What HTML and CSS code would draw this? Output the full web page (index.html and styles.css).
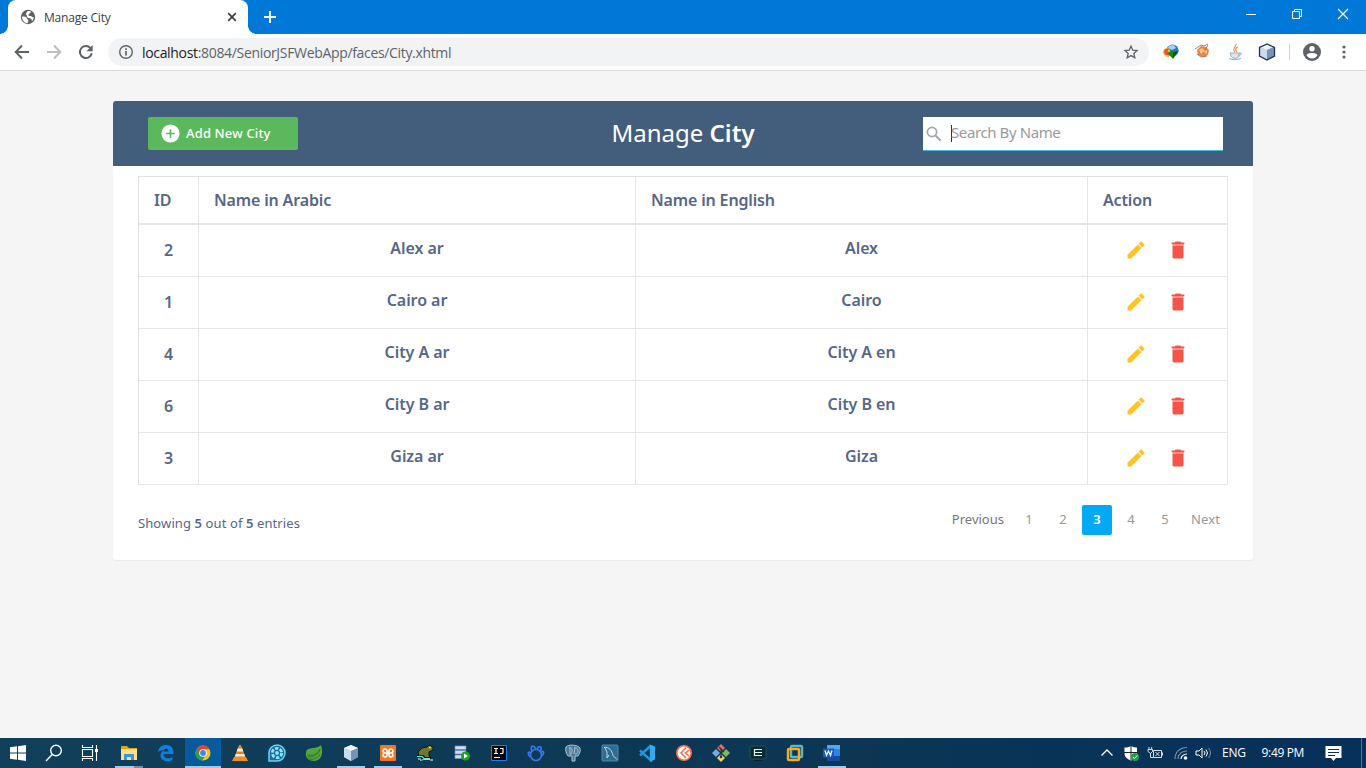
FILE: index.html
```html
<!DOCTYPE html>
<html lang="en">
<head>
<meta charset="utf-8">
<title>Manage City</title>
<link rel="stylesheet" href="styles.css">
</head>
<body>
<svg class="defs" aria-hidden="true">
  <symbol id="pen" viewBox="0 0 24 24"><path d="M3 17.250V21h3.750L17.810 9.940l-3.750-3.750L3 17.250zM20.710 7.040a1 1 0 0 0 0-1.410l-2.340-2.340a1 1 0 0 0-1.410 0l-1.830 1.830 3.750 3.750 1.830-1.830z" fill="#ffc324" stroke="#ffc324" stroke-width=".5"/></symbol>
  <symbol id="bin" viewBox="0 0 24 24"><path d="M6 7v12.500c0 1 .9 1.700 2 1.700h8c1.100 0 2-.7 2-1.700V7z" fill="#f55549"/><path d="M6 5.500h12v2H6z" fill="#f99d96"/><path d="M19 3.700h-3.500l-1-1h-5l-1 1H5v2h14z" fill="#f55549"/></symbol>
  <symbol id="cube" viewBox="0 0 18 18"><path d="M9 1l7 3v9l-7 4-7-4V4z" fill="#a6bfd8"/><path d="M2 4l7-3 7 3-7 3z" fill="#eef5fb"/><path d="M9 7l7-3v9l-7 4z" fill="#7794b6"/><path d="M2 4l7 3v10l-7-4z" fill="#c9dcec"/></symbol>
</svg>
<header class="tabs">
  <div class="tab">
    <svg width="16" height="16" viewBox="0 0 16 16"><circle cx="8" cy="8" r="7.200" fill="#5f6368"/><path d="M2 7.500c2 .2 4.500 0 5 1.800.2 1.500 1.500 1.200 1.300 2.700l-.8 2.300C4 14 1.800 11 2 7.500zM7.500 2.200c1.200-.6 3 0 3.500.6-.2 1.200-1.500 1.400-2.200 2.400-1 1.200.2 1.900 1.600 1.700 1.600-.1 2 1.800 3.400 1.300-.2 1.800-.9 3-1.800 3.900-.6-1.300-.2-2.500-1.900-2.800-1.800-.2-3.100-.7-3.200-2.300 0-1.300-.8-1-1-2 .2-1 .8-1.700 1.600-2.800z" fill="#fff"/></svg>
    <span class="tab-title">Manage City</span>
    <svg class="tab-close" width="10" height="10" viewBox="0 0 10 10"><path d="M1.200 1.200l7.600 7.600M8.800 1.200L1.200 8.800" stroke="#3c4043" stroke-width="1.700"/></svg>
  </div>
  <svg class="new-tab" width="14" height="14" viewBox="0 0 14 14"><path d="M7 1v12M1 7h12" stroke="#fff" stroke-width="2"/></svg>
  <div class="win-buttons">
    <svg width="12" height="12" viewBox="0 0 12 12"><path d="M1 6.500h10" stroke="#fff"/></svg>
    <svg width="12" height="12" viewBox="0 0 12 12"><path d="M1.500 3.500h7v7h-7zM3.500 3.500v-2h7v7h-2" fill="none" stroke="#fff"/></svg>
    <svg width="12" height="12" viewBox="0 0 12 12"><path d="M1 1l10 10M11 1L1 11" stroke="#fff" stroke-width="1.200"/></svg>
  </div>
</header>
<nav class="toolbar">
  <svg width="16" height="16" viewBox="0 0 16 16"><path d="M15 8H2M8 1.500L1.700 8 8 14.500" fill="none" stroke="#5f6368" stroke-width="2"/></svg>
  <svg width="16" height="16" viewBox="0 0 16 16"><path d="M1 8h13M8 1.500L14.300 8 8 14.500" fill="none" stroke="#bcbec1" stroke-width="2"/></svg>
  <svg width="16" height="16" viewBox="0 0 16 16"><path d="M13.800 9.200A6 6 0 1 1 12.400 4" fill="none" stroke="#5f6368" stroke-width="2"/><path d="M14.700 1v6.300H8.500z" fill="#5f6368"/></svg>
  <div class="omnibox">
    <svg width="16" height="16" viewBox="0 0 16 16"><circle cx="8" cy="8" r="6.300" fill="none" stroke="#5f6368" stroke-width="1.400"/><path d="M8 7v4.500M8 4.200v1.700" stroke="#5f6368" stroke-width="1.700"/></svg>
    <span class="url"><b>localhost</b>:8084/SeniorJSFWebApp/faces/City.xhtml</span>
    <svg class="star" width="16" height="16" viewBox="0 0 16 16"><path d="M8 2.200l1.800 4 4.300.4-3.300 2.900 1 4.300L8 11.600l-3.800 2.200 1-4.300-3.300-2.900 4.300-.4z" fill="none" stroke="#5f6368" stroke-width="1.300"/></svg>
  </div>
  <div class="extensions">
    <svg width="18" height="18" viewBox="0 0 18 18"><circle cx="10.500" cy="7.500" r="6" fill="#2e77b8"/><path d="M7 2.500l5-.5 2 3-4 2-4-2z" fill="#9cd4ef"/><path d="M2 6c3-2 5-1 6 1l-1 7c-3 0-6-2-6-5z" fill="#f0c51d"/><path d="M2 8c1-2 3-3 5-2-2 2-2 4 1 6-4 1-6-1-6-4z" fill="#e85135"/><path d="M5 9.500l12-2-6 8.500z" fill="#16851d"/><path d="M11 10l5-2-5 7z" fill="#064c15"/></svg>
    <svg width="18" height="18" viewBox="0 0 18 18"><g transform="translate(0 -1)"><path d="M3 8l4-4 5 1 3 3-1 5-5 2-5-2z" fill="#e9873d"/><path d="M5 8l3-2 3 3-4 3zM10 10l3-2v4z" fill="#f9c090"/><path d="M1 7l6-4 3 1 4-2M14 3l-3 5M3 12l4 3 6-1" fill="none" stroke="#8c6652" stroke-width=".8"/></g></svg>
    <svg width="18" height="18" viewBox="0 0 18 18"><path d="M10 1c1 3-5 4-1 8M12 4c-3 1-3 3-1 5" fill="none" stroke="#ef8a3c" stroke-width="1.100"/><path d="M4 10h9v3c-1 3-7 3-8 0zM13 10c4-1 2 3-1 3M3 15.500c3 1.500 8 1.500 12 0" fill="#dce6ed" stroke="#98b0c1"/></svg>
    <svg width="18" height="18" viewBox="0 0 18 18"><use href="#cube"/><path d="M9 1l7.500 3.500v8.500L9 17l-7.500-4V4.500z" fill="none" stroke="#1f2f5e" stroke-width="1.300"/></svg>
    <i class="divider"></i>
    <svg width="18" height="18" viewBox="0 0 18 18"><circle cx="9" cy="9" r="9" fill="#5f6368"/><circle cx="9" cy="5.700" r="2.700" fill="#fff"/><path d="M3.600 12.500c0-3.500 10.800-3.500 10.800 0C13 14.400 11.200 15.400 9 15.400s-4-1-5.400-2.900z" fill="#fff"/></svg>
    <svg class="more" width="4" height="14" viewBox="0 0 4 14"><g fill="#5f6368"><circle cx="2" cy="2" r="1.600"/><circle cx="2" cy="7" r="1.600"/><circle cx="2" cy="12" r="1.600"/></g></svg>
  </div>
</nav>

<main class="page">
  <section class="card">
    <div class="card-head">
      <button class="add"><svg width="19" height="19" viewBox="0 0 20 20"><circle cx="10" cy="10" r="9.500" fill="#fff"/><path d="M10 5.500v9M5.500 10h9" stroke="#5cb85c" stroke-width="1.700"/></svg><span>Add New City</span></button>
      <h2 class="title">Manage <b>City</b></h2>
      <div class="search"><svg width="16" height="16" viewBox="0 0 16 16"><circle cx="6" cy="6" r="4.600" fill="none" stroke="#a0a5b1" stroke-width="1.700"/><path d="M9.500 9.500l5 5" stroke="#a0a5b1" stroke-width="2"/></svg><i class="caret"></i><span>Search By Name</span></div>
    </div>
    <div class="card-body">
      <table class="cities">
        <colgroup><col class="c-id"><col class="c-ar"><col class="c-en"><col class="c-act"></colgroup>
        <thead><tr><th>ID</th><th>Name in Arabic</th><th>Name in English</th><th>Action</th></tr></thead>
        <tbody>
          <tr><td class="id">2</td><td>Alex ar</td><td>Alex</td><td class="act"><div><svg><use href="#pen"/></svg><svg><use href="#bin"/></svg></div></td></tr>
          <tr><td class="id">1</td><td>Cairo ar</td><td>Cairo</td><td class="act"><div><svg><use href="#pen"/></svg><svg><use href="#bin"/></svg></div></td></tr>
          <tr><td class="id">4</td><td>City A ar</td><td>City A en</td><td class="act"><div><svg><use href="#pen"/></svg><svg><use href="#bin"/></svg></div></td></tr>
          <tr><td class="id">6</td><td>City B ar</td><td>City B en</td><td class="act"><div><svg><use href="#pen"/></svg><svg><use href="#bin"/></svg></div></td></tr>
          <tr><td class="id">3</td><td>Giza ar</td><td>Giza</td><td class="act"><div><svg><use href="#pen"/></svg><svg><use href="#bin"/></svg></div></td></tr>
        </tbody>
      </table>
      <div class="foot">
        <div class="hint">Showing <b>5</b> out of <b>5</b> entries</div>
        <div class="pager"><span class="word prev">Previous</span><span>1</span><span>2</span><span class="on">3</span><span>4</span><span>5</span><span class="word next">Next</span></div>
      </div>
    </div>
  </section>
</main>

<footer class="taskbar">
  <div class="system">
    <div class="slot"><svg viewBox="0 0 18 18"><path d="M1 3.300l7-1v6.200H1zM9 2.200L17 1v7.500H9zM1 9.500h7v6.300l-7-1zM9 9.500h8V17l-8-1.200z" fill="#fff"/></svg></div>
    <div class="slot"><svg viewBox="0 0 18 18"><circle cx="11" cy="6.500" r="5.300" fill="none" stroke="#fff" stroke-width="1.400"/><path d="M7.200 10.500L1 17" stroke="#fff" stroke-width="1.400"/></svg></div>
    <div class="slot"><svg viewBox="0 0 18 18"><path d="M1.500 1v2.500h10V1M1.500 17v-2.500h10V17M1.500 5.500h10v7h-10zM15.500 1v16" fill="none" stroke="#fff" stroke-width="1.100"/><path d="M14 5h3v3h-3z" fill="#fff"/></svg></div>
  </div>
  <div class="apps">
    <div class="slot run split"><svg viewBox="0 0 18 18"><path d="M1 2h6l2 2h8v12H1z" fill="#dca31b"/><path d="M1 5h16v11H1z" fill="#ffe08a"/><path d="M4 16v-6h10v6h-3v-3H7v3z" fill="#3c94dc"/></svg></div>
    <div class="slot"><svg viewBox="0 0 18 18"><path d="M1 8C2 2.500 5.500 1 9 1c5 0 7.500 3.500 7.500 7.500V10H6.500c0 5 6 5 9 3v3c-3 1.800-7 1.500-9.500 0C2 13.500 3 8 7 6c-3 .2-5 1-6 2zm5.500-.5h5C11.500 3.500 7 3.500 6.500 7.500z" fill="#0e7fe0"/></svg></div>
    <div class="slot active"><svg viewBox="0 0 18 18"><circle cx="9" cy="9" r="7.500" fill="#f2c51d"/><path d="M2.500 5.200A7.500 7.500 0 0 0 8 16.400l4-5.400-3-2z" fill="#27a056"/><path d="M9 5.200h6.500a7.500 7.500 0 0 0-13 0L6 11z" fill="#e14335"/><circle cx="9" cy="9" r="3.800" fill="#fff"/><circle cx="9" cy="9" r="2.900" fill="#4285f4"/></svg></div>
    <div class="slot"><svg viewBox="0 0 18 18"><path d="M8 1h2l4.500 12h-11z" fill="#ef7e17"/><path d="M6.700 4.500h4.600l1 3H5.700zM4.800 10h8.400l.8 2.500H4z" fill="#eee"/><path d="M3 13h12l2 4H1z" fill="#f28c1f"/></svg></div>
    <div class="slot"><svg viewBox="0 0 18 18"><path d="M1 17V9a8 8 0 1 1 8 8z" fill="#1e6d91" stroke="#62d5ff" stroke-width="1.500"/><circle cx="9" cy="9" r="4.700" fill="none" stroke="#8fe4ff" stroke-width="2.800" stroke-dasharray="3.400 1.500"/><circle cx="9" cy="9" r="1.900" fill="#8fe4ff"/></svg></div>
    <div class="slot"><svg viewBox="0 0 18 18"><path d="M16 1c3 9 0 16-7 16C3 17 0 13 1 9c0-7 10-3 15-8z" fill="#55a53d"/><path d="M2 11c4 1 10 0 13-6-2 7-7 8-12 8M4 15c5 1 9-1 11-5" fill="none" stroke="#2f7a33" stroke-width="1"/></svg></div>
    <div class="slot run"><svg viewBox="0 0 18 18"><use href="#cube"/></svg></div>
    <div class="slot run"><svg viewBox="0 0 18 18"><rect x="1" y="1" width="16" height="16" rx="1" fill="#f37623"/><path d="M7.500 9H6a2 2 0 1 1 2-2.500v5A2 2 0 1 1 6 9h6a2 2 0 1 0-2-2.500v5A2 2 0 1 0 12 9" fill="none" stroke="#fff" stroke-width="1.600"/></svg></div>
    <div class="slot"><svg viewBox="0 0 18 18"><path d="M2 8l4-4 5-1 2-2 2 1 2 1v3l-4 2v4l2 1-3 1-9-1z" fill="#75752e" stroke="#101608"/><path d="M1 12.500h6l2 2h6M3 17l4-2h7" fill="none" stroke="#101608" stroke-width="2.600"/><path d="M1 12.500h5l2 2h6M4 16.500l4-1h6" fill="none" stroke="#5eeeff" stroke-width="1.200"/><circle cx="14" cy="3.500" r="1" fill="#e7dc8b"/><path d="M2 15h3M14 16h3" stroke="#fff"/></svg></div>
    <div class="slot"><svg viewBox="0 0 18 18"><path d="M2 2h11v3.500H2zM2 6.500h11V10H2zM2 11h11v3.500H2z" fill="#cfddf5" stroke="#728fbe" stroke-width=".7"/><circle cx="12.500" cy="12" r="4.500" fill="#1ba51d"/><path d="M11 9.500l4 2.500-4 2.500z" fill="#fff"/></svg></div>
    <div class="slot"><svg viewBox="0 0 18 18"><path d="M1.500 1.500h15v15h-15z" fill="#080808" stroke="#227aed"/><path d="M4 4.500h4M6 4.500v5M4 9.500h4M10 4.500h3v4q0 1-1 1h-2M4 13.500h6" stroke="#fff" stroke-width="1.200" fill="none"/></svg></div>
    <div class="slot"><svg viewBox="0 0 18 18"><g fill="none" stroke="#3875ee" stroke-width="1.700"><circle cx="9" cy="11" r="5.500"/><path d="M5 7.500C2 1 8 .5 8.700 5.500M10 5.500c1-5 6.500-3 3.200 1.500M3.800 9C0 6 1 12 3.500 13M14 8c4-2 3 2 .5 4"/></g></svg></div>
    <div class="slot"><svg viewBox="0 0 18 18"><path d="M2 3c3-3 10-2 13 0 3 3 0 7-1 9h-3v5H8v-5H4C2 9 1 6 2 3z" fill="#4d7898" stroke="#b2c5d3"/><path d="M6 3v8M11 3l-1 7M5 4c4-2 4 7 1 6M11 4c4-1 4 7 0 6" fill="none" stroke="#b2c5d3" stroke-width=".9"/></svg></div>
    <div class="slot"><svg viewBox="0 0 18 18"><rect x="1" y="1" width="16" height="16" rx="1" fill="#2f6d90" stroke="#5089a8"/><path d="M3 3.500c5-1 8 3 9 8l4 4M4 4l2 4v6l2-3" fill="none" stroke="#c4d9e4"/></svg></div>
    <div class="slot"><svg viewBox="0 0 18 18"><path d="M13 1.500v15L2 6.500M13 1.500L2 11.500" fill="none" stroke="#2196df" stroke-width="2.400"/><path d="M12 .5l5 2v13l-5 2z" fill="#35a9ee"/></svg></div>
    <div class="slot"><svg viewBox="0 0 18 18"><circle cx="9" cy="9" r="7.200" fill="#fff" stroke="#ff6c45" stroke-width="1.600"/><path d="M11 3.500L6 9l5 5M14 6l-3.500 3 3.500 3" stroke="#ff6c45" stroke-width="1.600" fill="none"/></svg></div>
    <div class="slot"><svg viewBox="0 0 18 18"><path d="M9 0l4 4-4 4-4-4z" fill="#e56e65"/><path d="M4 5l4 4-4 4-4-4z" fill="#79a8ea"/><path d="M14 5l4 4-4 4-4-4z" fill="#79bf59"/><path d="M9 10l4 4-4 4-4-4z" fill="#f2d269"/><path d="M7 3l5 5M9 4v9" stroke="#30303a" stroke-width="1.300"/><circle cx="9" cy="13" r="1.300" fill="#30303a"/></svg></div>
    <div class="slot"><svg viewBox="0 0 18 18"><rect x="1" y="2" width="16" height="13" rx="1" fill="#0d2b32" stroke="#244f55"/><path d="M13 5.500H5.500v6H13M6 8.500h7" fill="none" stroke="#e5f5ef" stroke-width="1.200"/><path d="M5 16.500h8" stroke="#0a1e29"/></svg></div>
    <div class="slot"><svg viewBox="0 0 18 18"><rect x="5" y="2" width="11" height="11" rx="1" fill="none" stroke="#5bb6c4" stroke-width="2.500"/><rect x="2" y="5" width="11" height="11" rx="1" fill="none" stroke="#f7a91f" stroke-width="2.500"/></svg></div>
    <div class="slot run"><svg viewBox="0 0 18 18"><path d="M4 1h13v16H4z" fill="#2e85dd"/><path d="M4 1h13v4H4z" fill="#50a9ee"/><path d="M4 12h13v5H4z" fill="#154aa0"/><path d="M0 4.500h11v9H0z" fill="#1859bd"/><path d="M2 6.500l1.500 5L5.500 7l2 4.500L9 6.500" stroke="#fff" fill="none" stroke-width="1.300"/></svg></div>
  </div>
  <div class="tray">
    <svg width="14" height="14" viewBox="0 0 14 14"><path d="M1.500 9.500L7 4l5.500 5.500" stroke="#fff" fill="none" stroke-width="1.300"/></svg>
    <svg class="shield" width="17" height="17" viewBox="0 0 17 17"><path d="M8 1c2 1 4 1.500 6 1.500V8c0 4-3 6-6 7.500C4 14 1.500 12 1.500 8V2.500C4 2.500 6 2 8 1z" fill="#fff"/><path d="M8 1v14M1 7.500h13" stroke="#222"/><circle cx="12" cy="12" r="4" fill="#18a150"/><path d="M9.800 12l1.500 1.500 3-3" stroke="#fff" fill="none"/></svg>
    <svg class="power" width="17" height="14" viewBox="0 0 17 14"><path d="M1 3.500h4.500v2L3.500 7.500 1 5.500zM2 1v2M4.700 1v2M3.500 7.500v4H6M6.500 4.500h8v7h-8zM15.500 6.500v3M8.500 6l4 4M12.500 6l-4 4" fill="none" stroke="#eef3f7" stroke-width=".9"/></svg>
    <svg class="wifi" width="14" height="14" viewBox="0 0 14 14"><g fill="none" stroke="#7890a5" stroke-width="1.200"><path d="M1 13C1 6 6 1.500 13 1.500M4 13c0-5 4-8 9-8"/><path d="M7 13c0-3 3-5 6-5" stroke="#fff"/></g><circle cx="11.500" cy="12" r="1.800" fill="#fff"/></svg>
    <svg class="sound" width="17" height="14" viewBox="0 0 17 14"><path d="M1 5h3l3-3v10L4 9H1z" fill="none" stroke="#fff"/><path d="M9 5q2 2 0 4M11 3.500q3 3.500 0 7" fill="none" stroke="#fff"/><path d="M13.500 2q4 5 0 10" fill="none" stroke="#7890a5"/></svg>
    <span class="lang">ENG</span>
    <span class="clock">9:49 PM</span>
    <svg class="note" width="17" height="17" viewBox="0 0 17 17"><path d="M.5 1h16v12H11l-2.500 3L6 13H.500z" fill="#fff"/><path d="M3 4.500h11M3 7.500h11M3 10.500h7" stroke="#0b3155"/></svg>
    <i class="edge"></i>
  </div>
</footer>
</body>
</html>
```
FILE: styles.css
```css
* { box-sizing: border-box; }
body { margin: 0; width: 1366px; height: 768px; overflow: hidden; display: flex; flex-direction: column; background: #f5f5f5; font-family: "Noto Sans", "Open Sans", sans-serif; color: #566787; }
svg { display: block; flex: none; }
.defs { display: none; }

.tabs { height: 34px; flex: none; background: #0078d7; display: flex; padding-left: 8px; }
.tab { width: 240px; height: 34px; background: #fff; border-radius: 8px 8px 0 0; display: flex; align-items: center; padding: 0 12px; position: relative; }
.tab::before, .tab::after { content: ""; position: absolute; bottom: 0; width: 8px; height: 8px; }
.tab::before { left: -8px; background: radial-gradient(circle at 0 0, #0078d7 7.5px, #fff 8px); }
.tab::after { right: -8px; background: radial-gradient(circle at 100% 0, #0078d7 7.5px, #fff 8px); }
.tab-title { margin-left: 8px; font: 12px "Open Sans", sans-serif; color: #3c4043; letter-spacing: -.2px; }
.tab-close { margin-left: auto; margin-right: -1px; }
.new-tab { margin: 10px 0 0 15px; }
.win-buttons { margin: 8px 17px 0 auto; display: flex; gap: 34px; }

.toolbar { height: 37px; flex: none; background: #fff; border-bottom: 1px solid #dcdcdc; display: flex; align-items: center; padding-left: 14px; gap: 16px; }
.omnibox { width: 1041px; height: 28px; border-radius: 14px; background: #f1f3f4; display: flex; align-items: center; padding: 0 10px; margin-left: -2px; }
.url { margin-left: 8px; font: 14px "Open Sans", sans-serif; letter-spacing: -.33px; color: #5f6368; }
.url b { font-weight: 400; color: #202124; }
.star { margin-left: auto; }
.extensions { display: flex; align-items: center; gap: 14px; margin-left: -3px; }
.divider { width: 1px; height: 16px; background: #cfd1d4; margin-left: -1px; margin-right: -1px; }
.more { margin-left: 7px; }

.page { flex: 1; padding: 30px 113px 0; }
.card { height: 459px; background: #fff; border-radius: 3px; box-shadow: 0 1px 1px rgba(0,0,0,.05); }
.card-head { height: 65px; background: #435d7d; border-radius: 3px 3px 0 0; padding: 16px 30px 0 35px; display: grid; grid-template-columns: 295px 1fr 300px; align-items: start; }
.add { width: 150px; height: 33px; border: 0; border-radius: 2px; background: #5cb85c; color: #fff; display: flex; align-items: center; padding: 0 13px; gap: 6px; font: 500 13px "Noto Sans", sans-serif; letter-spacing: .15px; }
.add span { padding-bottom: 1px; }
.title { margin: 0; text-align: center; font-size: 24px; font-weight: 400; line-height: 32px; color: #fff; }
.title b { font-weight: 600; }
.search { height: 34px; background: #fff; border-bottom: 1px solid #3fbae4; display: flex; align-items: center; padding-left: 3px; font-size: 15px; letter-spacing: -.4px; color: #9a9a9a; }
.search span { padding-bottom: 3px; }
.caret { width: 1px; height: 17px; margin-left: 9px; margin-right: -1px; background: #333; }

.card-body { padding: 10px 25px 0; }
.cities { width: 1090px; table-layout: fixed; border-collapse: separate; border-spacing: 0; border: solid #e0e0e0; border-width: 1px 0 0 1px; font-size: 16px; }
.c-id { width: 60px; } .c-ar { width: 437px; } .c-en { width: 452px; } .c-act { width: 140px; }
th, td { border: solid #e6e6e6; border-width: 0 1px 1px 0; font-weight: 600; line-height: 22px; }
th { height: 48px; border-bottom-width: 2px; padding: 0 15px 1px; text-align: left; letter-spacing: -.15px; }
td { height: 52px; padding: 12px 0 0; vertical-align: top; text-align: center; letter-spacing: -.05px; }
td.id { padding-top: 14px; }
td.act { padding-top: 14px; }
.act div { display: flex; gap: 20px; padding-left: 37px; }
.act svg { width: 22px; height: 22px; }
.foot { display: flex; justify-content: space-between; padding-top: 20px; font-size: 13px; }
.hint { padding-top: 9px; line-height: 18px; letter-spacing: .1px; }
.hint b { font-weight: 600; }
.pager { display: flex; gap: 4px; padding-right: 2px; color: #999; }
.pager span { width: 30px; height: 30px; line-height: 29px; text-align: center; border-radius: 2px; }
.pager .word { width: auto; padding: 0 6px; }
.pager .next { width: 42px; padding: 0 0 0 1px; letter-spacing: .15px; }
.pager .prev { color: #777; }
.pager .on { background: #03a9f4; color: #fff; font-weight: 600; }

.taskbar { height: 30px; flex: none; display: flex; background: linear-gradient(90deg, #11405b, #0c3653 60%, #06305b); }
.system { display: flex; width: 111px; }
.apps { display: flex; gap: 1px; }
.slot { width: 36px; height: 30px; display: flex; align-items: center; justify-content: center; }
.slot svg { width: 18px; height: 18px; }
.run { background: linear-gradient(#9ccbf0, #9ccbf0) 4px 28px / 28px 2px no-repeat; }
.split { background: linear-gradient(90deg, #9ccbf0 19px, #718fa5 19px) 4px 28px / 28px 2px no-repeat; }
.active { background: #075a9b; border-bottom: 2px solid #9ccbf0; padding-top: 2px; }
.tray { margin-left: auto; display: flex; align-items: center; color: #fff; font: 12px "Open Sans", sans-serif; }
.tray span { padding-bottom: 1px; }
.shield { margin-left: 9px; }
.power { margin-left: 7px; }
.wifi { margin-left: 10px; }
.sound { margin-left: 7px; }
.lang { margin-left: 10px; letter-spacing: -.3px; }
.clock { margin-left: 16px; letter-spacing: -.35px; }
.note { margin-left: 21px; }
.edge { width: 1px; height: 30px; margin: 0 4px 0 19px; background: #53708c; }
```
